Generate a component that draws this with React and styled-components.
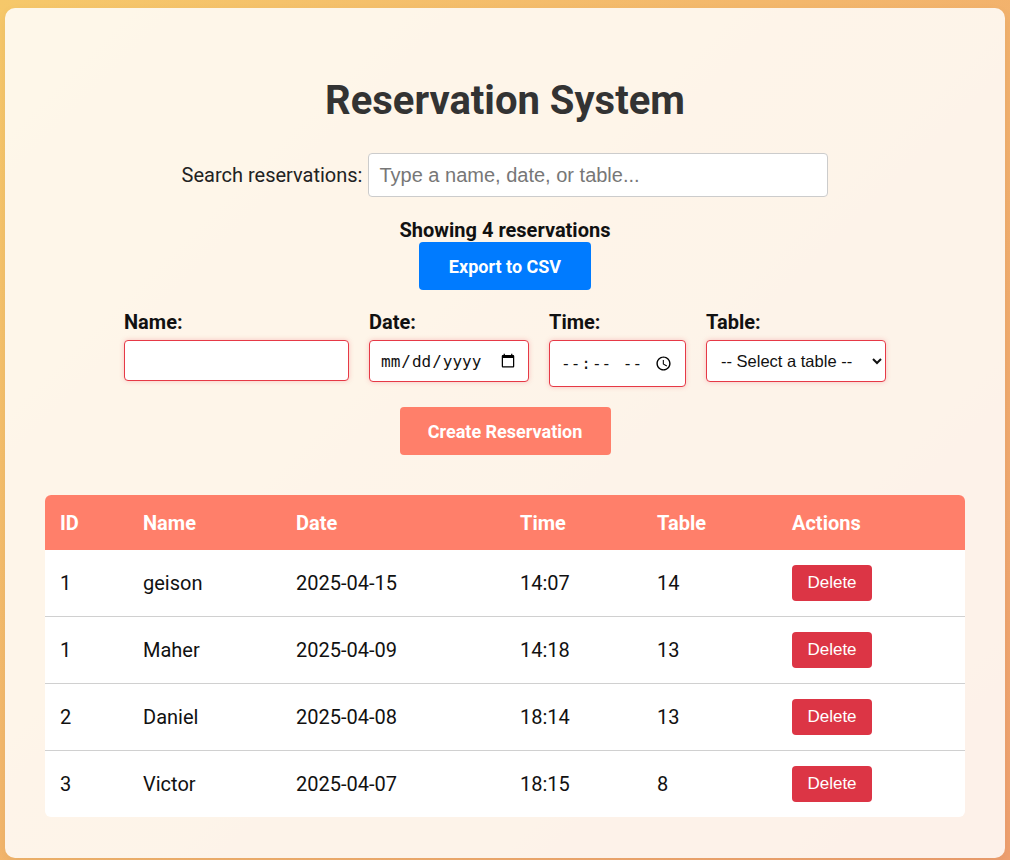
import { useState } from "react";
import styled, { createGlobalStyle } from "styled-components";

const GlobalStyle = createGlobalStyle`
  html, body {
    margin: 0;
    min-height: 100%;
  }
  body {
    font-family: Roboto, "Liberation Sans", sans-serif;
    background: linear-gradient(135deg, #f6c86a 0%, #efa06f 100%);
    min-height: 100vh;
  }
`;

const Page = styled.div`
  padding: 8px 5px 3px 5px;
  box-sizing: border-box;
  min-height: 100vh;
`;

const Card = styled.div`
  background: rgba(255, 255, 255, 0.85);
  border-radius: 10px;
  padding: 40px 40px 41px;
  min-height: 849px;
  box-sizing: border-box;
  box-shadow: 0 4px 12px rgba(0, 0, 0, 0.05);
`;

const Title = styled.h1`
  margin: 29px 0 29px;
  text-align: center;
  font-size: 40px;
  font-weight: 700;
  color: #333;
`;

const SearchRow = styled.div`
  display: flex;
  justify-content: center;
  align-items: center;
  gap: 6px;
  font-size: 20px;
  color: #222;
`;

const SearchInput = styled.input`
  width: 460px;
  height: 44px;
  box-sizing: border-box;
  padding: 8px 10px;
  font-family: "Liberation Sans", Arial, sans-serif;
  font-size: 20px;
  border: 1px solid #ccc;
  border-radius: 4px;
  background: #fff;
  &::placeholder {
    color: #777;
  }
`;

const Summary = styled.div`
  margin-top: 21px;
  text-align: center;
  font-size: 20px;
  font-weight: 700;
  color: #111;
`;

const ButtonRow = styled.div`
  display: flex;
  justify-content: center;
  margin-top: ${(p) => p.$top || 0}px;
`;

const Button = styled.button`
  border: none;
  border-radius: 4px;
  color: #fff;
  font-family: Roboto, sans-serif;
  font-weight: 700;
  font-size: 18px;
  cursor: pointer;
  height: 48px;
  width: ${(p) => p.$width}px;
  background: ${(p) => p.$bg};
`;

const Form = styled.div`
  display: flex;
  justify-content: center;
  gap: 20px;
  margin-top: 20px;
`;

const Field = styled.div`
  display: flex;
  flex-direction: column;
  gap: 6px;
`;

const Label = styled.label`
  font-size: 20px;
  font-weight: 700;
  color: #111;
`;

const fieldStyle = `
  box-sizing: border-box;
  border: 1px solid #e63946;
  border-radius: 4px;
  background: #fff;
  box-shadow: 0 0 5px rgba(230, 57, 70, 0.25);
  font-size: 16px;
  color: #111;
`;

const TextInput = styled.input`
  ${fieldStyle}
  width: ${(p) => p.$width}px;
  height: ${(p) => p.$height}px;
  padding: 8px 10px;
`;

const Select = styled.select`
  ${fieldStyle}
  width: 180px;
  height: 42px;
  padding: 8px 6px 8px 10px;
  font-family: "Liberation Sans", Arial, sans-serif;
  font-size: 16.5px;
`;

const TableWrap = styled.div`
  margin-top: 40px;
  background: #fff;
  border-radius: 6px;
  overflow: hidden;
`;

const Table = styled.table`
  width: 100%;
  border-collapse: separate;
  border-spacing: 0;
  font-size: 20px;
`;

const HeadCell = styled.th`
  background: #ff7f6a;
  color: #fff;
  text-align: left;
  font-weight: 700;
  height: 55px;
  padding: 0 15px;
  box-sizing: border-box;
  width: ${(p) => p.$w}px;
`;

const Row = styled.tr`
  &:last-child td {
    border-bottom: none;
  }
`;

const Cell = styled.td`
  padding: 15px;
  line-height: 36px;
  border-bottom: 1px solid #d0d0d0;
  color: #111;
`;

const DeleteButton = styled.button`
  display: block;
  width: 80px;
  height: 36px;
  border: none;
  border-radius: 4px;
  background: #dc3545;
  color: #fff;
  font-family: "Liberation Sans", Arial, sans-serif;
  font-size: 17px;
  line-height: normal;
  cursor: pointer;
`;

const columns = [
  { label: "ID", w: 83 },
  { label: "Name", w: 153 },
  { label: "Date", w: 224 },
  { label: "Time", w: 137 },
  { label: "Table", w: 135 },
  { label: "Actions", w: 188 },
];

const initial = [
  { id: 1, name: "geison", date: "2025-04-15", time: "14:07", table: 14 },
  { id: 1, name: "Maher", date: "2025-04-09", time: "14:18", table: 13 },
  { id: 2, name: "Daniel", date: "2025-04-08", time: "18:14", table: 13 },
  { id: 3, name: "Victor", date: "2025-04-07", time: "18:15", table: 8 },
];

export default function App() {
  const [query, setQuery] = useState("");
  const [rows, setRows] = useState(initial);

  return (
    <Page>
      <GlobalStyle />
      <Card>
        <Title>Reservation System</Title>
        <SearchRow>
          <span>Search reservations:</span>
          <SearchInput
            placeholder="Type a name, date, or table..."
            value={query}
            onChange={(e) => setQuery(e.target.value)}
          />
        </SearchRow>
        <Summary>Showing {rows.length} reservations</Summary>
        <ButtonRow>
          <Button $bg="#007bff" $width={172}>
            Export to CSV
          </Button>
        </ButtonRow>

        <Form>
          <Field>
            <Label>Name:</Label>
            <TextInput type="text" required $width={225} $height={41} />
          </Field>
          <Field>
            <Label>Date:</Label>
            <TextInput type="date" required $width={160} $height={42} />
          </Field>
          <Field>
            <Label>Time:</Label>
            <TextInput type="time" required $width={137} $height={47} />
          </Field>
          <Field>
            <Label>Table:</Label>
            <Select required defaultValue="">
              <option value="">-- Select a table --</option>
              {Array.from({ length: 15 }, (_, i) => (
                <option key={i} value={i + 1}>
                  Table {i + 1}
                </option>
              ))}
            </Select>
          </Field>
        </Form>

        <ButtonRow $top={20}>
          <Button $bg="#ff7f6a" $width={211}>
            Create Reservation
          </Button>
        </ButtonRow>

        <TableWrap>
          <Table>
            <thead>
              <tr>
                {columns.map((c) => (
                  <HeadCell key={c.label} $w={c.w}>
                    {c.label}
                  </HeadCell>
                ))}
              </tr>
            </thead>
            <tbody>
              {rows.map((r, i) => (
                <Row key={i}>
                  <Cell>{r.id}</Cell>
                  <Cell>{r.name}</Cell>
                  <Cell>{r.date}</Cell>
                  <Cell>{r.time}</Cell>
                  <Cell>{r.table}</Cell>
                  <Cell>
                    <DeleteButton
                      onClick={() => setRows(rows.filter((_, j) => j !== i))}
                    >
                      Delete
                    </DeleteButton>
                  </Cell>
                </Row>
              ))}
            </tbody>
          </Table>
        </TableWrap>
      </Card>
    </Page>
  );
}
